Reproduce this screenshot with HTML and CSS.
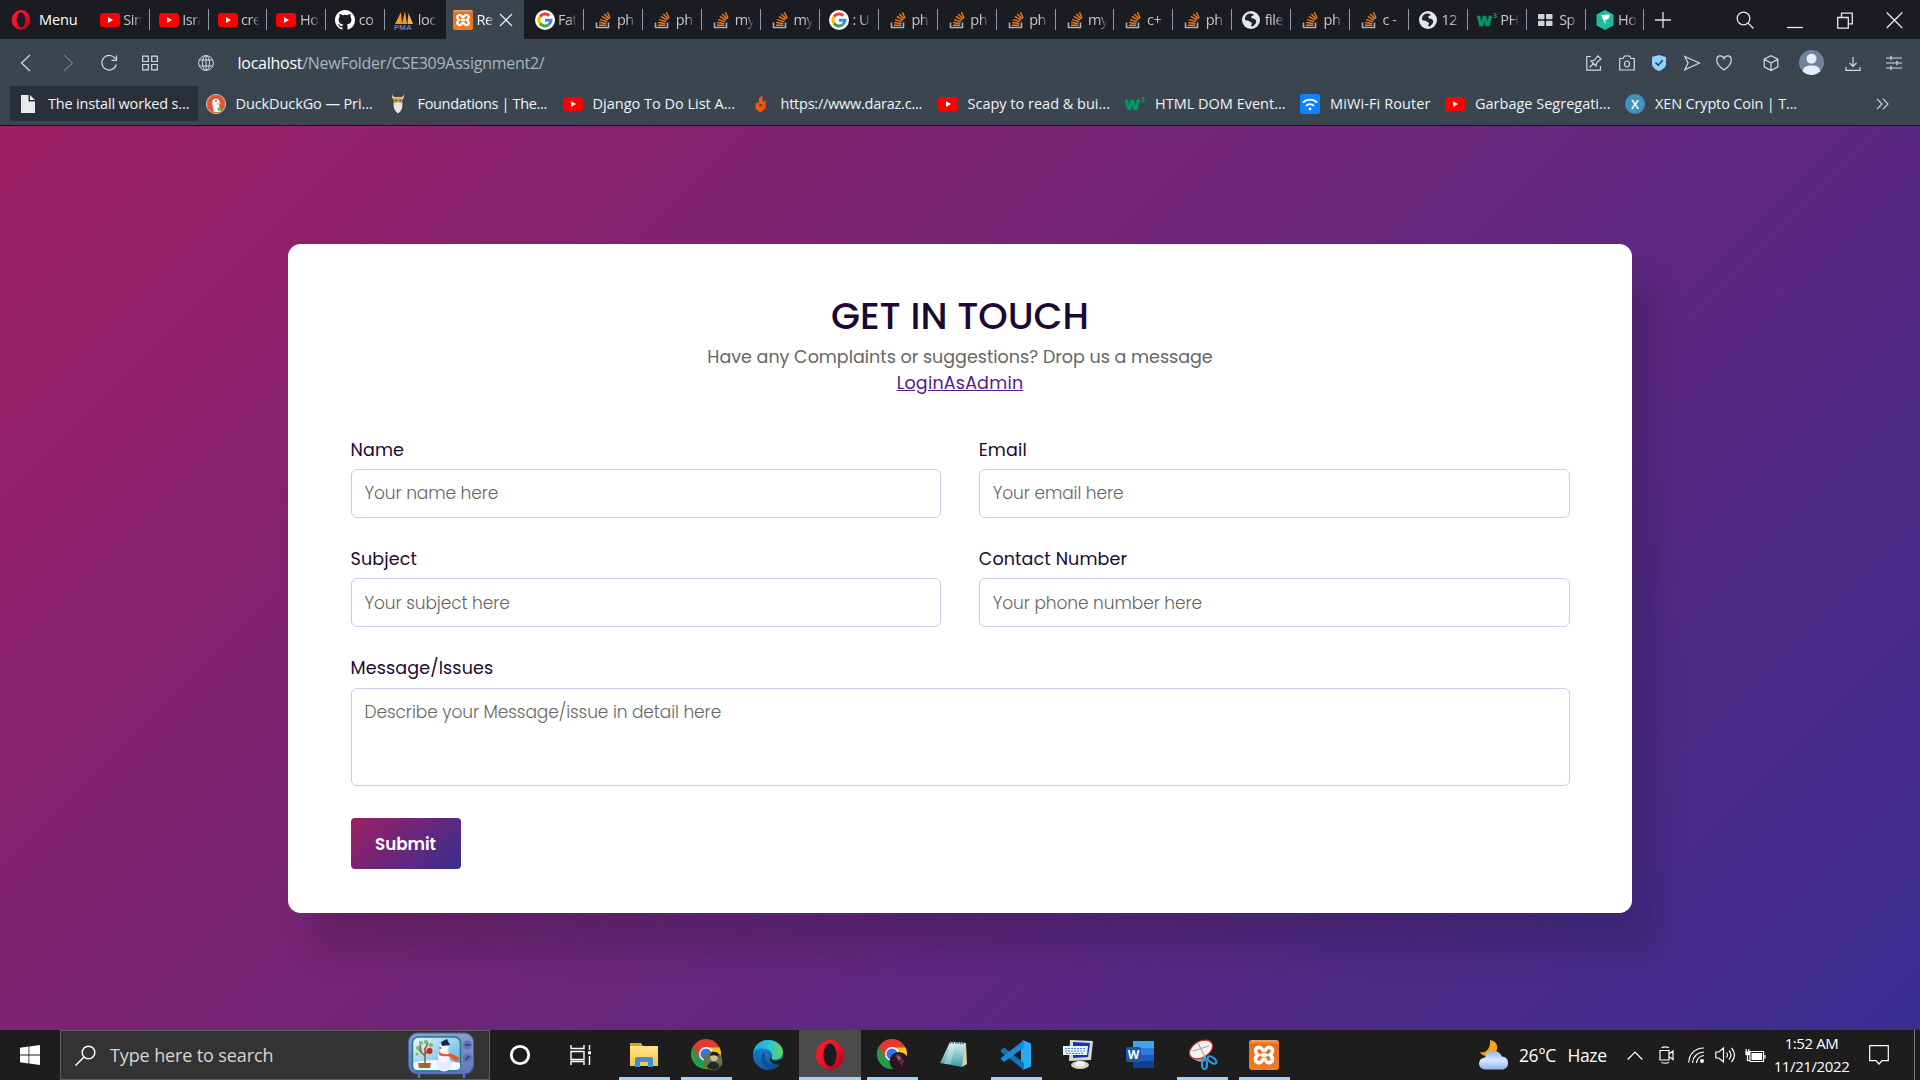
FILE: index.html
```html
<!DOCTYPE html>
<html lang="en">
<head>
<meta charset="utf-8">
<title>Responsive Contact Form</title>
<link rel="stylesheet" href="styles.css">
</head>
<body>
<svg class="defs" width="0" height="0" aria-hidden="true">
  <defs>
    <linearGradient id="gOpera" x1="0" y1="0" x2="1" y2="1"><stop offset="0" stop-color="#ff1b2d"/><stop offset=".5" stop-color="#f01225"/><stop offset="1" stop-color="#a70014"/></linearGradient>
    <linearGradient id="gTv" x1="0" y1="0" x2="0" y2="1"><stop offset="0" stop-color="#8d9bd0"/><stop offset="1" stop-color="#6277b8"/></linearGradient>
    <linearGradient id="gSky" x1="0" y1="0" x2="1" y2="1"><stop offset="0" stop-color="#eaf6fb"/><stop offset="1" stop-color="#48aede"/></linearGradient>
    <linearGradient id="gEdge" x1="0" y1="0" x2="1" y2="0"><stop offset="0" stop-color="#1d9fe0"/><stop offset=".55" stop-color="#30c3d8"/><stop offset="1" stop-color="#62d84c"/></linearGradient>
    <linearGradient id="gEdge2" x1="0" y1="0" x2="0" y2="1"><stop offset="0" stop-color="#1b8ad8"/><stop offset="1" stop-color="#0c59a4"/></linearGradient>
    <linearGradient id="gCloud" x1="0" y1="0" x2="0" y2="1"><stop offset="0" stop-color="#8fb4ea"/><stop offset=".5" stop-color="#dbe7fa"/><stop offset="1" stop-color="#8fb3ee"/></linearGradient>
    <linearGradient id="gNote" x1="0" y1="0" x2="0" y2="1"><stop offset="0" stop-color="#dff3f5"/><stop offset="1" stop-color="#3d9aa5"/></linearGradient>
    <linearGradient id="gFold" x1="0" y1="0" x2="0" y2="1"><stop offset="0" stop-color="#ffe38c"/><stop offset="1" stop-color="#f9c63c"/></linearGradient>
    <linearGradient id="gXampp" x1="0" y1="0" x2="0" y2="1"><stop offset="0" stop-color="#f0a572"/><stop offset=".15" stop-color="#e56c1c"/><stop offset="1" stop-color="#f37b20"/></linearGradient>
    <symbol id="yt" viewBox="0 0 20 20"><rect y="3" width="20" height="14.2" rx="3.5" fill="#f00"/><path d="M8 7.2v5.8l5-2.9z" fill="#fff"/></symbol>
    <symbol id="so" viewBox="0 0 20 20"><path d="M3.5 12.5v5h12v-5" fill="none" stroke="#a9b0b6" stroke-width="1.6"/><path d="M6 15.2h7.3M6.2 12.6l7.2.8M7 9.6l7 2M8.8 6.4l6.2 3.8M11.3 3.9l4.8 5.2M14.4 2.3l2.7 6" stroke="#e87922" stroke-width="1.5"/></symbol>
    <symbol id="gg" viewBox="0 0 20 20"><circle cx="10" cy="10" r="10" fill="#fff"/><g fill="none" stroke-width="3"><path d="M5 6.6A6 6 0 0 1 14.2 5.8" stroke="#ea4335"/><path d="M5 13.3A6 6 0 0 1 5 6.6" stroke="#fbbc05"/><path d="M13.8 14.6A6 6 0 0 1 5 13.3" stroke="#34a853"/><path d="M10 10.2h6A6 6 0 0 1 13.8 14.6" stroke="#4285f4"/></g></symbol>
    <symbol id="gl" viewBox="0 0 20 20"><circle cx="10" cy="10" r="9" fill="#e4e7ea"/><path d="M6 4.5c3-2 6-1 7 .5l-3 1.5 1 2c3 0 5 2 4 4.500l-3 3.500-2-.5 1-3-3-2-4-1c-.5-2 .5-4 2-5.500z" fill="#20252b"/></symbol>
    <symbol id="w3" viewBox="0 0 20 20"><text x="0" y="16" class="w3w">W</text><text x="16" y="8" class="w33">3</text></symbol>
    <symbol id="gh" viewBox="0 0 16 16"><path fill="#fff" d="M8 0C3.580 0 0 3.580 0 8c0 3.540 2.290 6.530 5.470 7.590.4.070.55-.17.55-.38 0-.19-.01-.82-.01-1.490-2.010.37-2.530-.49-2.690-.94-.09-.23-.48-.94-.82-1.130-.28-.15-.68-.52-.01-.53.63-.01 1.080.58 1.230.82.72 1.210 1.870.87 2.330.66.07-.52.28-.87.51-1.070-1.780-.2-3.640-.89-3.640-3.950 0-.87.31-1.590.82-2.150-.08-.2-.36-1.020.08-2.120 0 0 .67-.21 2.200.82a7.600 7.600 0 0 1 4 0c1.530-1.040 2.200-.82 2.200-.82.44 1.100.16 1.920.08 2.120.51.56.82 1.270.82 2.150 0 3.070-1.870 3.750-3.650 3.950.29.25.54.73.54 1.480 0 1.070-.01 1.930-.01 2.200 0 .21.15.46.55.38A8 8 0 0 0 16 8c0-4.420-3.580-8-8-8z"/></symbol>
    <symbol id="pma" viewBox="0 0 20 20"><path d="M1 14L7 2l1 12zM8 14L11 1l2 13z" fill="#f39a1c"/><path d="M13.500 14L14.500 3l4.500 11z" fill="#f6b256"/><text x="0" y="19.500" class="pmat">PMA</text></symbol>
    <symbol id="xa" viewBox="0 0 30 30"><rect width="30" height="30" rx="3" fill="url(#gXampp)"/><path d="M9 7.500c4-1.500 4 3.500 6 3.500s2-5 6-3.500 2.500 6 0 7.500c2.500 1.500 4 6 0 7.500s-4-3.500-6-3.500-2 5-6 3.500-2.500-6 0-7.500c-2.500-1.500-4-6 0-7.500z" fill="none" stroke="#fff" stroke-width="3.600"/><path d="M12 15h6" stroke="#fff" stroke-width="3.600"/></symbol>
    <symbol id="sp" viewBox="0 0 20 20"><g fill="#cfd3d7"><rect x="2" y="4" width="6.500" height="5.200" rx="1"/><rect x="10" y="4" width="6.500" height="5.200" rx="1"/><rect x="2" y="10.800" width="6.500" height="5.200" rx="1"/><rect x="10" y="10.800" width="6.500" height="5.200" rx="1"/></g></symbol>
    <symbol id="hx" viewBox="0 0 20 20"><path d="M10 0l8.500 4.500v11L10 20l-8.500-4.500v-11z" fill="#1abc9c"/><path d="M6 5l9-.5-1.500 4.500-3.500 1 1 4.500-2.500-4z" fill="#fff"/></symbol>
    <symbol id="op" viewBox="0 0 20 20"><ellipse cx="10" cy="10" rx="9.300" ry="10" fill="url(#gOpera)"/><ellipse cx="10" cy="10" rx="4.400" ry="7.600" class="ophole"/></symbol>
    <symbol id="chrome" viewBox="0 0 32 32"><circle cx="15" cy="15" r="15" fill="#e33b2e"/><path d="M2 7.500A15 15 0 0 0 15 30l6-10-13-1z" fill="#229a48"/><path d="M15 30A15 15 0 0 0 28.500 8.500H15l7 10z" fill="#fcc31e"/><circle cx="15" cy="15" r="7" fill="#fff"/><circle cx="15" cy="15" r="5.600" fill="#2f78e6"/></symbol>
  </defs>
</svg>

<header class="browser">
  <div class="tabbar">
    <div class="menu"><svg class="i20"><use href="#op"/></svg><span>Menu</span></div>
    <div class="tab"><svg class="i20"><use href="#yt"/></svg><span>Sin</span></div>
    <div class="tab"><svg class="i20"><use href="#yt"/></svg><span>Isra</span></div>
    <div class="tab"><svg class="i20"><use href="#yt"/></svg><span>cre</span></div>
    <div class="tab"><svg class="i20"><use href="#yt"/></svg><span>Ho</span></div>
    <div class="tab"><svg class="i20"><use href="#gh"/></svg><span>co</span></div>
    <div class="tab last"><svg class="i20"><use href="#pma"/></svg><span>loc</span></div>
    <div class="tab active"><svg class="i20"><use href="#xa"/></svg><span>Re</span><svg class="x" viewBox="0 0 14 14"><path d="M1 1l12 12M13 1L1 13" stroke="#e8eaec" stroke-width="1.300"/></svg></div>
    <div class="tab"><svg class="i20"><use href="#gg"/></svg><span>Fat</span></div>
    <div class="tab"><svg class="i20"><use href="#so"/></svg><span>ph</span></div>
    <div class="tab"><svg class="i20"><use href="#so"/></svg><span>ph</span></div>
    <div class="tab"><svg class="i20"><use href="#so"/></svg><span>my</span></div>
    <div class="tab"><svg class="i20"><use href="#so"/></svg><span>my</span></div>
    <div class="tab"><svg class="i20"><use href="#gg"/></svg><span>: U</span></div>
    <div class="tab"><svg class="i20"><use href="#so"/></svg><span>ph</span></div>
    <div class="tab"><svg class="i20"><use href="#so"/></svg><span>ph</span></div>
    <div class="tab"><svg class="i20"><use href="#so"/></svg><span>ph</span></div>
    <div class="tab"><svg class="i20"><use href="#so"/></svg><span>my</span></div>
    <div class="tab"><svg class="i20"><use href="#so"/></svg><span>c+</span></div>
    <div class="tab"><svg class="i20"><use href="#so"/></svg><span>ph</span></div>
    <div class="tab"><svg class="i20"><use href="#gl"/></svg><span>file</span></div>
    <div class="tab"><svg class="i20"><use href="#so"/></svg><span>ph</span></div>
    <div class="tab"><svg class="i20"><use href="#so"/></svg><span>c -</span></div>
    <div class="tab"><svg class="i20"><use href="#gl"/></svg><span>12</span></div>
    <div class="tab"><svg class="i20"><use href="#w3"/></svg><span>PH</span></div>
    <div class="tab"><svg class="i20"><use href="#sp"/></svg><span>Sp</span></div>
    <div class="tab"><svg class="i20"><use href="#hx"/></svg><span>Ho</span></div>
    <svg class="plus" viewBox="0 0 16 16"><path d="M8 0v16M0 8h16"/></svg>
    <div class="winctl">
      <svg width="18" height="18" viewBox="0 0 18 18"><circle cx="7.500" cy="7.500" r="6.300"/><path d="M12 12l5.500 5.500"/></svg>
      <svg width="16" height="18" viewBox="0 0 16 18"><path d="M0 16.500h16"/></svg>
      <svg width="16" height="18" viewBox="0 0 16 18"><path d="M.7 6.500h10.600v10.600H.7zM4.500 6V2.200h10.800v10.600H11.800"/></svg>
      <svg width="17" height="18" viewBox="0 0 17 18"><path d="M.7 1.500l15.600 15.500M16.300 1.500L.7 17"/></svg>
    </div>
  </div>

  <div class="toolbar">
    <svg class="t" viewBox="0 0 16 16"><path d="M11 0L2.500 8 11 16"/></svg>
    <svg class="t fwd" viewBox="0 0 16 16"><path d="M4 0l8.500 8L4 16"/></svg>
    <svg class="t" viewBox="0 0 16 16"><path d="M14.500 4A7.300 7.300 0 1 0 15.300 9.500M15.500.5v4.800h-5"/></svg>
    <svg class="t" viewBox="0 0 16 16"><path d="M.7 1.200h5.600v5.300H.7zM9.700 1.200h5.600v5.300H9.700zM.7 9.500h5.600v5.300H.7zM9.700 9.500h5.600v5.300H9.700z"/></svg>
    <svg class="t globe" viewBox="0 0 16 16"><circle cx="8" cy="8" r="7.400"/><ellipse cx="8" cy="8" rx="3.500" ry="7.400"/><path d="M8 .6v14.800M1.500 5h13M1.500 11h13"/></svg>
    <div class="url"><b>localhost</b>/NewFolder/CSE309Assignment2/</div>
    <div class="actions">
      <svg class="t" viewBox="0 0 16 16"><path d="M5 1.500H.8v13.700H14.500V11M3.500 12.500l4.500-4.500M5 6l5 5 .8-3.500L15 4 11.800.8 8.500 5z"/></svg>
      <svg class="t" viewBox="0 0 16 16"><path d="M.7 3.500H4L5.500 1h5L12 3.500h3.300v11.500H.7z"/><ellipse cx="8" cy="9" rx="2.500" ry="3"/></svg>
      <svg class="t" viewBox="0 0 16 16"><path class="shield" d="M8 0l7 2v7c0 3-3 5.500-7 7-4-1.500-7-4-7-7V2z"/><path class="check" d="M4.500 7.500l2.700 2.700 4.500-5"/></svg>
      <svg class="t" viewBox="0 0 16 16"><path d="M.8 1.500L15.500 8 .8 14.800 4 8z"/></svg>
      <svg class="t" viewBox="0 0 16 16"><path d="M8 15C2 11 .7 8 .7 5 .7 2 2.500.8 4.300.8 6 .8 7.500 2 8 3.500 8.500 2 10 .8 11.700.8c1.800 0 3.600 1.200 3.600 4.200 0 3-1.300 6-7.300 10z"/></svg>
      <svg class="t cube" viewBox="0 0 16 16"><path d="M8 .7l6.800 3.500v7.600L8 15.500l-6.800-3.700V4.200zM1.200 4.200L8 8l6.800-3.800M8 8v7.500"/></svg>
      <svg class="avatar" viewBox="0 0 25 25"><circle cx="12.500" cy="12.500" r="12.500" fill="#71839a"/><circle cx="12.500" cy="8.800" r="5" fill="#e6eefa"/><path d="M3.800 21.500c0-4 3-6 8.700-6s8.700 2 8.700 6a12.500 12.500 0 0 1-17.400 0z" fill="#e6eefa"/></svg>
      <svg class="t dl" viewBox="0 0 16 16"><path d="M8 2v9.500M4.500 8L8 11.500 11.500 8M1 12v3.300h14V12"/></svg>
      <svg class="t sl" viewBox="0 0 16 16"><path d="M0 3h16M0 8h16M0 13h16M5 .8v4.500M11 5.800v4.500M5 10.800v4.500"/></svg>
    </div>
  </div>

  <nav class="bookmarks">
    <div class="bm on"><svg class="i20" viewBox="0 0 20 20"><path d="M3 1h7.500v6.500H17V19H3z" fill="#e8eaed"/><path d="M12 1l5 5h-5z" fill="#e8eaed"/></svg><span>The install worked s...</span></div>
    <div class="bm"><svg class="i20" viewBox="0 0 20 20"><circle cx="10" cy="10" r="9.600" fill="#de5833" stroke="#e8d9d4" stroke-width=".8"/><path d="M8 18c-1-4-2-8-1.500-11 .5-3 6-3 7 0 .5 2-1 5 0 7l1 4z" fill="#fff"/><path d="M10.500 8.500l5 1-4.500 1.800z" fill="#fdd20a"/><circle cx="10" cy="6.800" r=".9" fill="#2d4f8e"/><path d="M11 14l4-1v4l-3-.5z" fill="#67bd47"/></svg><span>DuckDuckGo — Pri...</span></div>
    <div class="bm"><svg class="i20" viewBox="0 0 20 20"><path d="M4 0c-.5 3 .5 5 2 6h8c1.500-1 2.500-3 2-6-.5 2-1.500 3-3 3H7C5.500 3 4.500 2 4 0z" fill="#e9c77c"/><path d="M6 4h8l.5 6h-9z" fill="#d29a4c"/><path d="M8 6.500h.1M12 6.500h.1" stroke="#3b3024" stroke-width="1.500" stroke-linecap="round"/><path d="M5.500 9.500l3-1h3l3 1c0 5-1.500 8-4.500 10-3-2-4.500-5-4.500-10z" fill="#e7e7e7"/></svg><span>Foundations | The...</span></div>
    <div class="bm"><svg class="i20"><use href="#yt"/></svg><span>Django To Do List A...</span></div>
    <div class="bm"><svg class="i20" viewBox="0 0 20 20"><path d="M11.500 1.500V8l3-1.500v8L9.500 18.500 4.500 15V9.500L8 8V4z" fill="#f85606"/><path d="M8.500 9.500l3.500 1.800-3.500 1.800z" fill="#3b4550"/></svg><span>https://www.daraz.c...</span></div>
    <div class="bm"><svg class="i20"><use href="#yt"/></svg><span>Scapy to read &amp; bui...</span></div>
    <div class="bm"><svg class="i20"><use href="#w3"/></svg><span>HTML DOM Event...</span></div>
    <div class="bm"><svg class="i20" viewBox="0 0 20 20"><rect width="20" height="20" rx="2" fill="#0a84ff"/><path d="M3 8.500a10 10 0 0 1 14 0M6 11.800a6 6 0 0 1 8 0" fill="none" stroke="#fff" stroke-width="1.800"/><circle cx="10" cy="15" r="1.400" fill="#fff"/></svg><span>MiWi-Fi Router</span></div>
    <div class="bm"><svg class="i20"><use href="#yt"/></svg><span>Garbage Segregati...</span></div>
    <div class="bm"><svg class="i20" viewBox="0 0 20 20"><circle cx="10" cy="10" r="10" fill="#3f93bd"/><text x="10" y="15" class="xent">X</text></svg><span>XEN Crypto Coin | T...</span></div>
    <svg class="more" viewBox="0 0 13 12"><path d="M1 .8L6 6l-5 5.200M7 .8L12 6l-5 5.200"/></svg>
  </nav>
</header>

<main class="page">
  <form class="card">
    <h1>GET IN TOUCH</h1>
    <p class="sub">Have any Complaints or suggestions? Drop us a message</p>
    <p class="login"><a href="#">LoginAsAdmin</a></p>
    <div class="grid">
      <div class="field"><label for="name">Name</label><input id="name" placeholder="Your name here"></div>
      <div class="field"><label for="email">Email</label><input id="email" placeholder="Your email here"></div>
      <div class="field"><label for="subject">Subject</label><input id="subject" placeholder="Your subject here"></div>
      <div class="field"><label for="phone">Contact Number</label><input id="phone" placeholder="Your phone number here"></div>
      <div class="field wide"><label for="message">Message/Issues</label><textarea id="message" placeholder="Describe your Message/issue in detail here"></textarea></div>
    </div>
    <button type="button">Submit</button>
  </form>
</main>

<footer class="taskbar">
  <div class="start"><svg width="20" height="20" viewBox="0 0 20 20"><path fill="#fff" d="M0 2.800l8.500-1.200v8H0zM9.300 1.500L20 0v9.600H9.300zM0 10.400h8.500v8L0 17.200zM9.300 10.400H20V20L9.300 18.500z"/></svg></div>
  <div class="search">
    <svg width="21" height="21" viewBox="0 0 21 21"><circle cx="13.500" cy="7.500" r="6.300"/><path d="M9 12l-8.500 8.500"/></svg>
    <span>Type here to search</span>
    <svg class="tv" viewBox="0 0 66 46"><path d="M11 40v6M56 40v6" stroke="#5b78c4" stroke-width="2.500"/><rect x=".5" y="1" width="65" height="41" rx="9" fill="url(#gTv)" stroke="#4b5fa6"/><rect x="4.500" y="5" width="48" height="34" rx="6" fill="url(#gSky)" stroke="#1c7d86" stroke-width="1.500"/><path d="M5.500 31c10-4 30-4 46.500 0v4q0 3-4 3H9q-3.500 0-3.500-4z" fill="#f3f8ff"/><path d="M17 33V16M17 24l-6-6M17 22l6-6M13 20l-1-7M17 17l3-6" stroke="#8a6433" stroke-width="1.600" fill="none"/><g fill="#7bb661"><circle cx="10" cy="16" r="2"/><circle cx="13" cy="11" r="2"/><circle cx="18" cy="10" r="2"/><circle cx="23" cy="13" r="2"/><circle cx="9" cy="22" r="1.600"/></g><circle cx="21.500" cy="19" r="3" fill="#e01b24"/><path d="M10 31h13l-1 5H11z" fill="#9a6a35"/><circle cx="36" cy="32" r="7.500" fill="#e9ecff"/><circle cx="36" cy="24" r="6" fill="#f5f6ff"/><circle cx="36" cy="16" r="4.500" fill="#fff"/><path d="M33 10l6-3 3 6-8 1z" fill="#1f2457"/><path d="M33 15l-3 1 3 1z" fill="#e5252a"/><path d="M31 20q6 4 11 1l10 5-3 4-9-6q-6 1-9-1z" fill="#f0562b"/><circle cx="59.500" cy="13" r="4.500" fill="#6470b8"/><circle cx="59.500" cy="26" r="4.500" fill="#6470b8"/><path d="M57 13h5M57.500 28l4-4" stroke="#303a7a" stroke-width="1.500"/></svg>
  </div>
  <div class="slot c"><svg width="22" height="22" viewBox="0 0 22 22"><circle cx="11" cy="11" r="8.700" fill="none" stroke="#fff" stroke-width="2.800"/></svg></div>
  <div class="slot view"><svg width="22" height="20" viewBox="0 0 22 20" fill="none" stroke="#fff" stroke-width="1.400"><path d="M1 0v3.500h13V0M1 6.500h13v8H1zM1 20v-3.500h13V20M19.500 0v5M19.500 11v9"/><path d="M18 6.300h3v3h-3z" fill="#fff" stroke="none"/></svg></div>

  <div class="slot run"><svg width="32" height="32" viewBox="0 0 32 32"><path d="M2 4h11l2 3v4H2z" fill="#e0a210"/><path d="M2 7h28v20H2z" fill="url(#gFold)"/><path d="M7 28v-8q0-2 2-2h14q2 0 2 2v8h-5v-5h-8v5z" fill="#3f8fdc"/></svg></div>
  <div class="slot run chrome"><svg width="32" height="32" viewBox="0 0 32 32"><use href="#chrome" width="32" height="32"/><circle cx="22" cy="22" r="9.500" fill="#65753f"/><circle cx="23" cy="18.500" r="3.800" fill="#d6b8a0"/><path d="M19 17q1-5 5-4 4 0 3.500 5-3-3-8.500-1z" fill="#261c16"/><path d="M15.500 28q3-6 8-5 5 1 5 5-6 6-13 0z" fill="#25262b"/></svg></div>
  <div class="slot"><svg width="32" height="32" viewBox="0 0 32 32"><circle cx="16" cy="16" r="15" fill="url(#gEdge2)"/><path d="M1 15C2 6 8 1 16 1c9 0 15 6 15 12 0 5-4 7.500-8 7.500-3 0-4-1-3.500-2 1-2 1-5-2-7C12 8 3 9 1 15z" fill="url(#gEdge)"/><path d="M12 13c-4 4-3 12 3 16 5 2 10 0 13-4-8 3-15-1-15-7q0-3-1-5z" fill="#0b4f93"/><path d="M19.500 16q.5 2-.5 4 1 2 5 1.800 4 0 7-3l1.500 4-4 2.500c-5 1.500-10-1-10.500-5z" fill="#1d1d1d"/></svg></div>
  <div class="slot run cur"><svg width="30" height="30"><use href="#op"/></svg></div>
  <div class="slot run chrome"><svg width="32" height="32" viewBox="0 0 32 32"><use href="#chrome" width="32" height="32"/><circle cx="22" cy="22.500" r="9.500" fill="#2a1620"/><path d="M18 17q4-4 6 0l3 5-2 6-3-6z" fill="#5d2c45"/><path d="M20 16l4 3-3 3z" fill="#a1607a"/></svg></div>
  <div class="slot"><svg width="32" height="32" viewBox="0 0 32 32"><path d="M12 3l16 1 1 21-5 3z" fill="#d7cfa8"/><path d="M12 3l15 1-3 24L2 24z" fill="url(#gNote)"/><path d="M14 3h3l-4 22H6z" fill="#fff" opacity=".25"/><path d="M12 3.500l15 1" stroke="#5c6b70" stroke-width="2" stroke-dasharray="1.500 1"/></svg></div>
  <div class="slot run"><svg width="32" height="32" viewBox="0 0 32 32"><path d="M23 1l8 3.500v23L23 31 21 23V9z" fill="#29a9f2"/><path d="M1 11l3-2.500L24 24v7L1 13z" fill="#0f74ba"/><path d="M1 20l3 3L24 8.500V1L1 19z" fill="#1c8ad6"/></svg></div>
  <div class="slot"><svg width="32" height="32" viewBox="0 0 32 32"><path d="M8 1l23 1-2 19-22 1z" fill="#d8d8d2"/><path d="M11 3l17 1-2 14-15 1z" fill="#1c2ec0"/><path d="M1 7h25l-1 9H1z" fill="#e6f0fa"/><path d="M3 9.500h21M3 12h21M4 14.500h18" stroke="#4c90d8" stroke-width="1.200" stroke-dasharray="2 1"/><ellipse cx="18" cy="26" rx="9" ry="4" fill="#d0d0cc"/><ellipse cx="18" cy="25" rx="5" ry="3" fill="#f2f2f0"/></svg></div>
  <div class="slot"><svg width="32" height="32" viewBox="0 0 32 32"><path d="M9 2h21v7H9z" fill="#41a5ee"/><path d="M9 9h21v7H9z" fill="#2b7cd3"/><path d="M9 16h21v6H9z" fill="#185abd"/><path d="M9 22h21v7H9z" fill="#103f91"/><rect x="2" y="8" width="15" height="15" rx="1.500" fill="#1b57b0"/><text x="9.500" y="20" class="wordt">W</text></svg></div>
  <div class="slot run"><svg width="32" height="32" viewBox="0 0 32 32"><ellipse cx="12" cy="17" rx="9" ry="5" fill="#9c9c9c" transform="rotate(25 12 17)"/><ellipse cx="15" cy="10.500" rx="12.500" ry="8" fill="#f4f4f4" stroke="#c7332c" stroke-width="1.200" transform="rotate(-30 15 10.500)"/><path d="M7 12l16-5M12 4l8 16" stroke="#a7a7a7" stroke-width="1.200"/><g fill="none" stroke="#2b9bd8" stroke-width="2.200"><ellipse cx="18.500" cy="25" rx="2.500" ry="5"/><ellipse cx="26" cy="21" rx="2.500" ry="5" transform="rotate(-55 26 21)"/></g></svg></div>
  <div class="slot run"><svg width="30" height="30"><use href="#xa"/></svg></div>

  <div class="tray">
    <svg class="wx" viewBox="0 0 31 30"><path d="M11 0c8 1 9 9 5 13S3 17 1 12c6 2 11-4 10-12z" fill="#f5a623"/><path d="M6 29.500a6 6 0 0 1 0-12 9 9 0 0 1 17-1 6.600 6.600 0 0 1 1 13z" fill="url(#gCloud)"/></svg>
    <span class="wt">26°C</span><span class="wt hz">Haze</span>
    <svg class="chev" viewBox="0 0 16 9"><path d="M.7 8.500L8 1l7.300 7.500"/></svg>
    <svg class="meet" viewBox="0 0 16 18"><path d="M1 4.500h9v9.500H1zM10 8l4-3v8.500l-4-3M2.500 1.800Q6 0 10 1.800M2.500 16.500q3.500 1.500 7.500 0"/></svg>
    <svg class="wifi" viewBox="0 0 17 17"><path d="M.8 15.500C1 7 7 1 16 1M4.500 16C5 9.500 9 5.500 16 5M8.500 16c.5-4 3-7 7.500-7.500"/><circle class="dot" cx="14" cy="14" r="2"/></svg>
    <svg class="vol" viewBox="0 0 21 18"><path d="M.8 6h3L8.500 2v14L3.800 12h-3zM11.500 6.500q2 2.500 0 5M14 4.500q4 4.500 0 9M16.500 2q6 7 0 14"/></svg>
    <svg class="bat" viewBox="0 0 21 15"><path d="M5 3.500h13.500v10H5zM20 7v3.500M2.500 8v4.500H5M1.200 1v3M3.800 1v3"/><path class="dot" d="M6.500 5h10.500v7H6.500zM.3 3.500h4.500v3L2.500 8 .3 6.500z"/></svg>
    <div class="clock"><span>1:52 AM</span><span>11/21/2022</span></div>
    <svg class="act" viewBox="0 0 20 20"><path d="M.7.7h18.600v15H13L10 19l-3-3.300H.7z"/></svg>
    <i class="peek"></i>
  </div>
</footer>
</body>
</html>
```
FILE: styles.css
```css
* { box-sizing: border-box; }
body {
  margin: 0;
  width: 1920px;
  height: 1080px;
  overflow: hidden;
  display: flex;
  flex-direction: column;
  font-family: "Segoe UI", "Open Sans", sans-serif;
}
svg { display: block; flex: none; }
.defs { position: absolute; }
.i20 { width: 20px; height: 20px; }

/* browser chrome */
.browser { height: 126px; background: #3b4550; border-bottom: 1px solid #10141b; flex: none; }
.tabbar { height: 39px; background: #1a1c21; display: flex; align-items: center; color: #c3c7cb; font-size: 14.5px; }
.menu { width: 90.8px; padding-left: 11px; display: flex; align-items: center; gap: 8px; color: #fff; letter-spacing: -.1px; }
.ophole { fill: #1a1c21; }
.cur .ophole { fill: #4b4b4b; }
.tab { width: 58.9px; height: 21px; flex: none; padding-left: 9px; display: flex; align-items: center; gap: 3.500px; border-right: 1px solid #8e9aa8; }
.tab span {
  width: 18px;
  overflow: hidden;
  white-space: nowrap;
  line-height: 21px;
  letter-spacing: -.5px;
  -webkit-mask-image: linear-gradient(90deg, #000 60%, rgba(0, 0, 0, .15));
  mask-image: linear-gradient(90deg, #000 60%, rgba(0, 0, 0, .15));
}
.tab.last { border-right: 0; }
.tab.active { width: 78px; height: 39px; margin: 0 1.600px 0 1.800px; padding-left: 7px; background: #3b4550; border: 0; color: #fff; }
.x { width: 14px; height: 14px; margin-left: 1.500px; }
.plus { width: 16px; height: 16px; margin-left: 11px; fill: none; stroke: #dfe2e5; stroke-width: 1.300; }
.winctl { margin-left: auto; padding-right: 17px; display: flex; gap: 33.400px; fill: none; stroke: #e6e8ea; stroke-width: 1.300; }

.toolbar { height: 47px; padding: 0 18px 0 19px; display: flex; align-items: center; }
.t { width: 16px; height: 16px; fill: none; stroke: #d3d9df; stroke-width: 1.200; overflow: visible; }
.toolbar > .t { margin-right: 25px; }
.toolbar > .fwd { stroke: #6c7884; }
.toolbar > .globe { margin: 0 23.500px 0 15px; stroke-width: 1; }
.url { font-size: 16px; letter-spacing: -.26px; color: #a9b5c1; white-space: nowrap; }
.url b { font-weight: 400; color: #fff; }
.actions { margin-left: auto; display: flex; align-items: center; gap: 16.500px; }
.shield { fill: #8fd3fb; stroke: none; }
.check { stroke: #24415a; stroke-width: 1.600; }
.cube { margin-left: 14px; }
.avatar { width: 25px; height: 25px; margin-left: 4px; }
.dl { margin-left: 4px; }
.sl { margin-left: 9px; }

.bookmarks { height: 35px; padding-left: 10px; display: flex; align-items: center; color: #f1f3f5; font-size: 14.500px; }
.bm { height: 35px; padding-left: 8px; display: flex; align-items: center; gap: 10px; white-space: nowrap; flex: none; width: 187.500px; }
.bm.on { background: #2a3039; letter-spacing: -.17px; }
.bm:nth-child(2) { width: 182px; letter-spacing: -.1px; }
.bm:nth-child(3) { width: 175px; letter-spacing: -.34px; }
.bm:nth-child(4) { width: 188px; }
.bm:nth-child(5) { width: 187px; letter-spacing: -.24px; }
.bm:nth-child(7) { width: 175px; }
.bm:nth-child(8) { width: 145px; letter-spacing: .1px; }
.bm:nth-child(9) { width: 180px; }
.bm:nth-child(10) { letter-spacing: -.15px; }
.more { width: 13px; height: 12px; margin-left: auto; margin-right: 31px; fill: none; stroke: #d3d9df; stroke-width: 1.200; }
.w3w { font: 800 14.500px "Open Sans", sans-serif; fill: #059862; stroke: #059862; stroke-width: .6; }
.w33 { font: 700 7px "Open Sans", sans-serif; fill: #059862; }
.pmat { font: 700 8px "Liberation Sans", sans-serif; fill: #6c78af; }
.xent { font: 600 13px "Open Sans", sans-serif; fill: #fff; text-anchor: middle; }
.wordt { font: 700 12px "Open Sans", sans-serif; fill: #fff; text-anchor: middle; }

/* page */
.page {
  height: 904px;
  flex: none;
  display: flex;
  align-items: center;
  justify-content: center;
  background: linear-gradient(135deg, #9e1f63, #392d91);
  font-family: Poppins, Inter, sans-serif;
}
.card {
  width: 1344px;
  height: 669px;
  padding: 50px 62.500px 0;
  background: #fff;
  border-radius: 12.500px;
  box-shadow: 25px 37.500px 31px rgba(0, 0, 0, .15);
  font-size: 17.500px;
  color: #1c0735;
}
h1 { margin: 0 0 5px; font-size: 37.500px; line-height: 45px; font-weight: 500; text-align: center; }
p { margin: 0; line-height: 26px; text-align: center; }
.sub { color: #666; }
.login a { color: #551a8b; letter-spacing: .2px; }
.grid { margin-top: 40.200px; display: grid; grid-template-columns: 1fr 1fr; column-gap: 37.500px; row-gap: 27.300px; }
.field { display: flex; flex-direction: column; }
.wide { grid-column: 1 / 3; }
label { line-height: 28.600px; margin-bottom: 4.900px; letter-spacing: .14px; }
input, textarea {
  height: 48.400px;
  width: 100%;
  padding: 0 13px;
  border: 1px solid #c8cde4;
  border-radius: 6px;
  font: 300 17px Poppins, Inter, sans-serif;
  letter-spacing: -.08px;
  resize: none;
  outline: 0;
}
textarea { height: 98.400px; padding-top: 10px; line-height: 26px; }
input::placeholder, textarea::placeholder { color: #666; }
button {
  display: block;
  width: 110px;
  height: 50.700px;
  margin-top: 32.500px;
  padding: 1px 0 0;
  border: 0;
  border-radius: 4px;
  background: linear-gradient(135deg, #9e1f63, #392d91);
  color: #fff;
  font: 600 16.670px Poppins, Inter, sans-serif;
}

/* taskbar */
.taskbar { height: 50px; flex: none; background: #1d1d1d; display: flex; color: #fff; }
.start { width: 60px; display: flex; align-items: center; justify-content: center; }
.search { width: 430px; padding: 0 15px 0 14px; display: flex; align-items: center; background: #333; border: 1px solid #5e5e5e; color: #d6d6d6; font-size: 18px; letter-spacing: -.12px; fill: none; }
.search > svg:first-child { stroke: #fff; stroke-width: 1.500; margin-right: 14px; }
.search span { white-space: nowrap; }
.tv { width: 66px; height: 46px; margin-left: auto; }
.slot { width: 62px; height: 50px; flex: none; display: flex; align-items: center; justify-content: center; }
.slot.c { margin-left: -1px; }
.slot.view { padding-right: 2px; }
.slot.chrome { padding-left: 2px; }
.run { background: linear-gradient(#a5d0fc, #a5d0fc) center bottom / 51px 3px no-repeat; }
.run.cur { background: linear-gradient(#a5d0fc, #a5d0fc) center bottom / 62px 3px no-repeat #4b4b4b; }
.tray { margin-left: auto; display: flex; align-items: center; fill: none; }
.tray svg { stroke: #fff; stroke-width: 1.200; fill: none; }
.tray .dot { fill: #fff; stroke: none; }
.tray .wx { width: 31px; height: 30px; stroke: none; margin-right: 9px; }
.wt { font-size: 17.500px; letter-spacing: -.4px; width: 48.500px; white-space: nowrap; }
.wt.hz { width: 59.500px; }
.chev { width: 16px; height: 9px; margin-right: 16px; }
.meet { width: 16px; height: 18px; margin-right: 13px; }
.wifi { width: 17px; height: 17px; margin-right: 10px; }
.vol { width: 21px; height: 18px; margin-right: 9px; }
.bat { width: 21px; height: 15px; margin-right: 7px; }
.clock { width: 77px; font-size: 15px; letter-spacing: -.4px; line-height: 23px; display: flex; flex-direction: column; align-items: center; white-space: nowrap; margin-right: 19px; }
.act { width: 20px; height: 20px; margin-right: 25px; }
.peek { width: 6px; height: 50px; border-left: 1px solid #7a7a7a; }
```
